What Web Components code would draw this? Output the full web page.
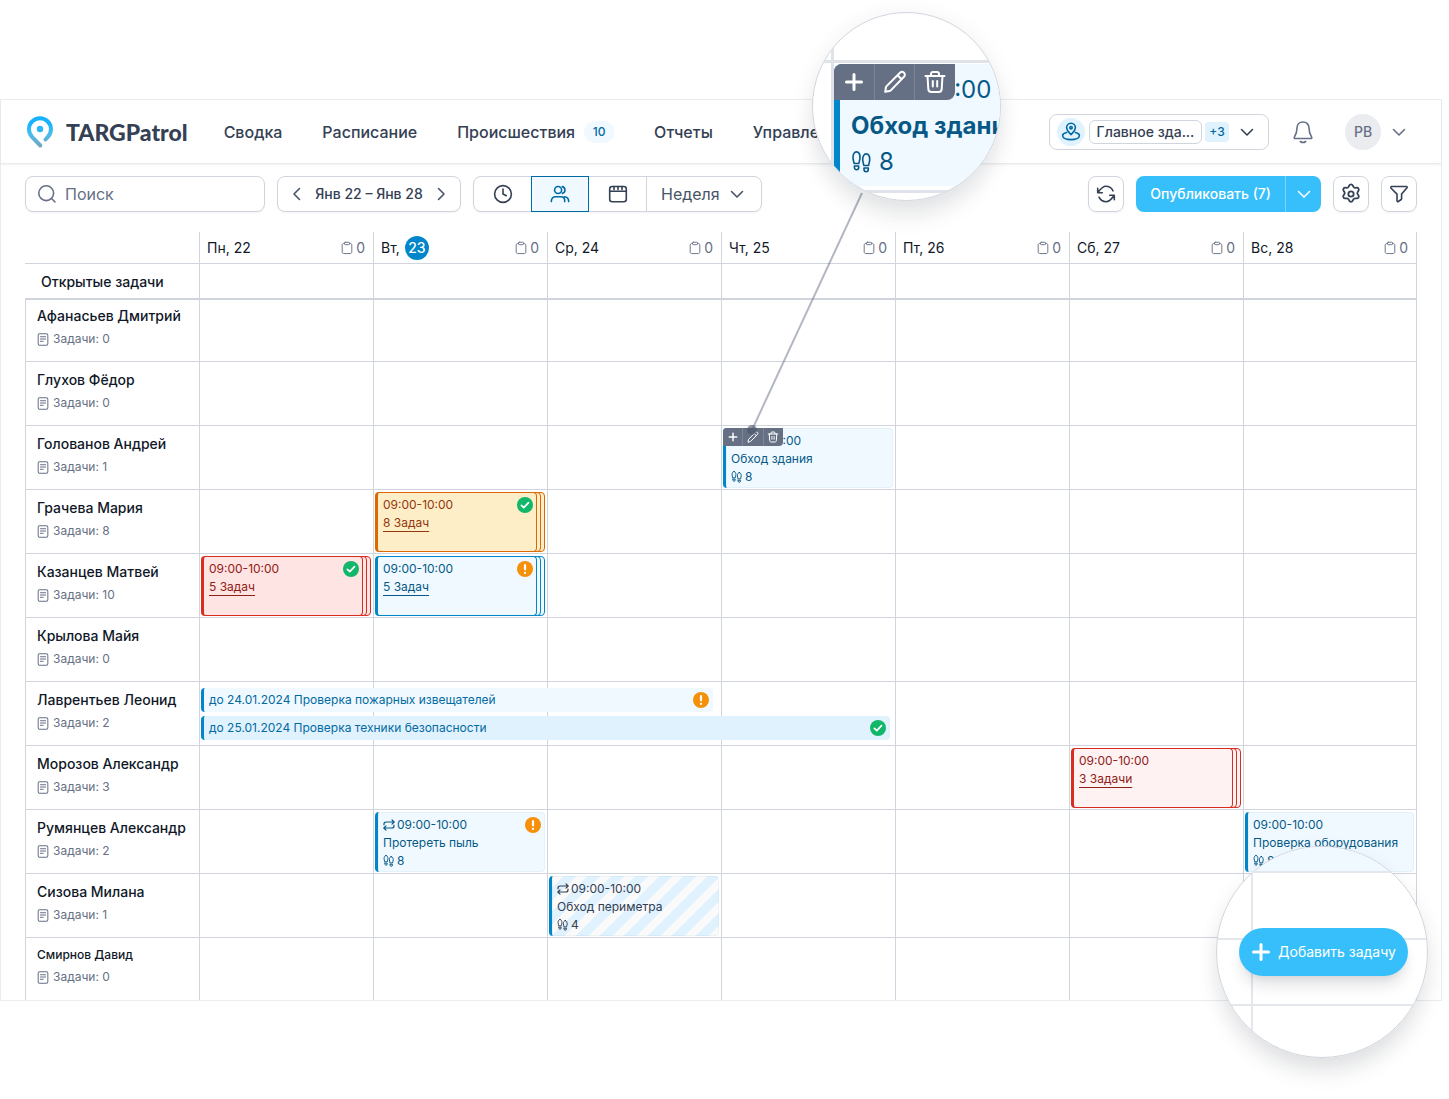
<!DOCTYPE html>
<html lang="ru">
<head>
<meta charset="utf-8">
<meta name="viewport" content="width=device-width, initial-scale=1">
<title>TARGPatrol</title>
<style>
  body {
    margin: 0;
    background: #fff;
    color: #101828;
    font-family: Inter, "Noto Sans", sans-serif;
    font-size: 14px;
    line-height: 20px;
  }
</style>
</head>
<body>
<patrol-app>
  <app-header slot="header"></app-header>
  <schedule-toolbar slot="toolbar"></schedule-toolbar>
  <schedule-grid slot="content"></schedule-grid>
  <card-lens slot="overlay"></card-lens>
  <add-lens slot="overlay"></add-lens>
</patrol-app>

<script>
const define = (name, html, setup) => {
  customElements.define(name, class extends HTMLElement {
    connectedCallback() {
      if (this.shadowRoot) return;
      const root = this.attachShadow({ mode: 'open' });
      const t = document.createElement('template');
      t.innerHTML = '<style>:host,*{box-sizing:border-box}</style>' + (typeof html === 'function' ? html(this) : html);
      root.append(t.content.cloneNode(true));
      if (setup) setup(this, root);
    }
  });
};

/* ---------- icons: [viewBox, markup] ---------- */
const ICONS = {
  search: ['0 0 20 20', '<circle cx="9.2" cy="9.2" r="7.4"/><path d="M14.8 14.8l3.2 3.2"/>'],
  left: ['0 0 20 20', '<path d="M12.5 4.5L7 10l5.5 5.5"/>'],
  right: ['0 0 20 20', '<path d="M7.5 4.5L13 10l-5.5 5.5"/>'],
  down: ['0 0 20 20', '<path d="M4.5 7.5L10 13l5.5-5.5"/>'],
  clock: ['0 0 20 20', '<circle cx="10" cy="10" r="8.4"/><path d="M10 5v5l3.3 1.7"/>'],
  users: ['0 0 20 20', '<circle cx="8.1" cy="6" r="3.5"/><path d="M12.3 2.6a3.5 3.5 0 0 1 0 6.8M1.4 17.6v-.8c0-2.3 1.6-4 4-4h5.3c2.400 0 4 1.700 4 4v.8M14.300 12.700c2.700.2 4.300 1.800 4.300 4.100v.8"/>'],
  calendar: ['0 0 20 20', '<rect x="1.700" y="2.500" width="16.600" height="15.300" rx="2.500"/><path d="M1.700 7.200h16.600M6 2.500v3M10 2.500v3M14 2.500v3"/>'],
  refresh: ['0 0 20 20', '<path d="M1.700 4.200v4.600h4.600M18.300 15.800v-4.600h-4.600M2 8.500C4.200 5.500 6 2.300 10 2.300c3.200 0 5.600 1.700 7 4.500M18 11.500c-2.200 3-4 6.200-8 6.200-3.200 0-5.600-1.700-7-4.500"/>'],
  gear: ['1 1 18 18', '<circle cx="10" cy="10" r="2.400"/><path d="M8.100 2.900l.3-.6a1.800 1.800 0 0 1 3.200 0l.5 1.100a1.800 1.800 0 0 0 1.800 1l1.200-.1a1.800 1.800 0 0 1 1.600 2.800l-.7 1a1.800 1.800 0 0 0 0 2.100l.7 1a1.800 1.800 0 0 1-1.600 2.800l-1.200-.1a1.800 1.800 0 0 0-1.800 1l-.5 1.100a1.800 1.800 0 0 1-3.200 0l-.5-1.100a1.800 1.800 0 0 0-1.800-1l-1.200.1a1.800 1.800 0 0 1-1.600-2.800l.7-1a1.800 1.800 0 0 0 0-2.100l-.7-1a1.800 1.800 0 0 1 1.600-2.800l1.200.1a1.800 1.800 0 0 0 1.800-1z"/>'],
  filter: ['0 0 20 20', '<path d="M1.800 3.300c0-.5.3-.8.8-.8h14.800c.8 0 1 .8.600 1.300l-5.400 6.300v4.600c0 .4-.1.600-.4.800l-2.900 2c-.6.400-1.300 0-1.300-.7v-6.700L2.100 4.200c-.2-.3-.3-.6-.3-.9z"/>'],
  bell: ['0 0 24 24', '<path d="M9.300 21.500c1.600 1.200 3.800 1.200 5.400 0M18 8c0-3.600-2.500-6-6-6S6 4.400 6 8c0 5-1.300 7-2.700 9.300-.3.500 0 1.200.7 1.200h16c.7 0 1-.7.700-1.200C19.300 15 18 13 18 8z"/>'],
  place: ['0 0 20 20', '<path d="M10 12.700c-.8-1.300-4.400-3.500-4.400-7.100a4.400 4.400 0 0 1 8.800 0c0 3.600-3.600 5.800-4.400 7.100z"/><circle cx="10" cy="5.700" r="1.200"/><path d="M5.600 10.500c-2.500.6-4 1.600-4 3C1.600 16 5.400 17.600 10 17.600s8.400-1.600 8.400-4.100c0-1.400-1.500-2.400-4-3"/>'],
  clipboard: ['0 0 14 16', '<path d="M4 2.700H3.300c-1.100 0-1.900.8-1.900 1.900v8c0 1.100.8 1.900 1.900 1.900h7.400c1.100 0 1.900-.8 1.900-1.900v-8c0-1.100-.8-1.900-1.900-1.900H10"/><rect x="4" y="1.300" width="6" height="2.800" rx="1"/>'],
  note: ['0 0 12 14', '<rect x=".8" y=".8" width="10.400" height="12.400" rx="1.500"/><path d="M3.200 4h5.600M3.200 6.500h5.600M3.200 9h3"/>'],
  repeat: ['0 0 12 12', '<path d="M9 .8l2.200 2.200L9 5.200M11 3H3.200C1.900 3 1 3.800 1 5v.8M3 6.800L.8 9 3 11.200M1 9h7.800C10.100 9 11 8.200 11 7v-.8"/>'],
  feet: ['0 0 20 22', '<path d="M4.500.9C2.200.9 1 3.700 1 6.600c0 2.200.8 3.800 1.100 5.900h4.800C7.200 10.400 8 8.800 8 6.600 8 3.700 6.800.9 4.500.9zM2.400 15h4.300v1.200c0 1.600-.7 2.500-2.100 2.500s-2.200-.9-2.200-2.500z"/><path d="M14.200 2.900c2.300 0 3.500 2.800 3.500 5.700 0 2.200-.8 3.800-1.100 5.900h-4.800c-.3-2.100-1.100-3.700-1.100-5.900 0-2.900 1.200-5.700 3.500-5.700zM12 17h4.300v1.200c0 1.600-.7 2.500-2.100 2.500s-2.200-.9-2.200-2.500z"/>'],
  plus: ['0 0 20 20', '<path d="M10 2.500v15M2.500 10h15"/>'],
  pencil: ['0 0 24 24', '<path d="M2.200 21.800l.7-4.300c.1-.6.300-1 .7-1.400L17 2.800c1.200-1.200 2.900-1.100 4 0s1.200 2.800 0 4L7.800 20.400c-.4.4-.8.6-1.400.7zM14.600 5.200l4 4"/>'],
  trash: ['0 0 24 24', '<path d="M2.500 6h19M8 6V4c0-1.300.8-2 2-2h4c1.200 0 2 .7 2 2v2M4.500 6l.8 13c.1 1.900 1.200 3 3 3h7.400c1.800 0 2.900-1.100 3-3l.8-13M9.800 11v5.500M14.200 11v5.500"/>'],
  ok: ['0 0 16 16', '<circle cx="8" cy="8" r="8" fill="#12b76a" stroke="none"/><path stroke="#fff" stroke-width="1.700" d="M4.400 8.300l2.400 2.300 4.700-4.900"/>'],
  warn: ['0 0 16 16', '<circle cx="8" cy="8" r="8" fill="#f79009" stroke="none"/><path stroke="#fff" stroke-width="2.200" d="M8 4v4.300M8 11.800v.1"/>'],
  logo: ['0 0 26 32', '<defs><linearGradient id="g" x1="0" y1="0" x2="0" y2="1"><stop offset=".2" stop-color="#15b2ff"/><stop offset=".55" stop-color="#48bdec"/><stop offset="1" stop-color="#6fa9c4"/></linearGradient></defs><path stroke="url(#g)" stroke-width="4" d="M13.300 29.500L5 20.800A11 11 0 1 1 21.100 20.600L18.500 23.500"/><circle cx="13" cy="13" r="3.200" fill="#2cb5f7" stroke="none"/>']
};

define('ui-icon', el => {
  const [box, body] = ICONS[el.getAttribute('name')];
  const w = el.getAttribute('w') || 20, h = el.getAttribute('h') || w;
  return `<style>:host{display:block;flex:none;width:${w}px;height:${h}px}svg{display:block;overflow:visible}</style>
  <svg width="${w}" height="${h}" viewBox="${box}" fill="none" stroke="currentColor" stroke-width="${el.getAttribute('stroke') || 1.6}" stroke-linecap="round" stroke-linejoin="round" aria-hidden="true">${body}</svg>`;
});

/* ---------- page shell ---------- */
define('patrol-app', `<style>
  :host{display:block;padding:99px 7px 98px 0;overflow:hidden}
  main{position:relative;border:1px solid #eaecf0}
  .body{padding:12px 24px 0}
</style>
<main>
  <slot name="header"></slot>
  <div class="body"><slot name="toolbar"></slot><slot name="content"></slot></div>
  <slot name="overlay"></slot>
</main>`);

define('nav-link', el => `<style>
  :host{display:block}
  a{display:flex;align-items:center;gap:9px;color:#344054;font-size:16px;line-height:24px;font-weight:500;text-decoration:none}
  span{background:#f0f9ff;color:#026aa2;border-radius:11px;font-size:12px;line-height:22px;width:30px;text-align:center}
</style><a href="#"><slot></slot>${el.hasAttribute('count') ? `<span>${el.getAttribute('count')}</span>` : ''}</a>`);

define('app-header', `<style>
  :host{display:flex;align-items:center;height:64px;padding:0 32px 0 26px;border-bottom:1px solid #eaecf0;box-shadow:0 1px 2px rgba(16,24,40,.06)}
  .logo{display:flex;align-items:center;gap:13px;color:#344054;text-decoration:none;font:900 23px/28px Lato,sans-serif}
  nav{display:flex;gap:40px;margin-left:36px}
  .right{display:flex;align-items:center;margin-left:auto}
  button{font:inherit;background:none;border:0;padding:0;color:#667085;display:flex;align-items:center}
  .site{height:36px;width:220px;padding:0 11px 0 7px;border:1px solid #d0d5dd;border-radius:8px;color:#344054}
  .pin{display:grid;place-items:center;width:28px;height:28px;border-radius:50%;background:#e0f2fe;color:#026aa2}
  .chip{margin-left:4px;flex:1;border:1px solid #d0d5dd;border-radius:6px;line-height:22px;font-weight:500;text-align:center;white-space:nowrap}
  .more{margin:0 8px 0 3px;width:24px;border-radius:4px;background:#e0f2fe;color:#026aa2;font-size:12px;font-weight:500;line-height:20px}
  .bell{margin:0 30px 0 22px}
  .user{gap:8px}
  .ava{width:36px;height:36px;border-radius:50%;background:#eaecf0;line-height:36px;font-weight:500}
</style>
<a class="logo" href="#"><ui-icon name="logo" w="26" h="32"></ui-icon>TARGPatrol</a>
<nav>
  <nav-link>Сводка</nav-link><nav-link>Расписание</nav-link><nav-link count="10">Происшествия</nav-link><nav-link>Отчеты</nav-link><nav-link>Управление</nav-link>
</nav>
<div class="right">
  <button class="site"><span class="pin"><ui-icon name="place"></ui-icon></span><span class="chip">Главное зда...</span><span class="more">+3</span><ui-icon name="down"></ui-icon></button>
  <button class="bell" aria-label="Уведомления"><ui-icon name="bell" w="24"></ui-icon></button>
  <button class="user"><span class="ava">РВ</span><ui-icon name="down"></ui-icon></button>
</div>`);

define('schedule-toolbar', `<style>
  :host{display:flex;align-items:center;gap:12px;height:36px;color:#344054}
  button,input,select{font:inherit;color:inherit;margin:0;padding:0;border:0;background:none;outline:0}
  button{display:grid;place-items:center}
  .box{display:flex;align-items:center;height:36px;border:1px solid #d0d5dd;border-radius:8px;box-shadow:0 1px 2px rgba(16,24,40,.05);background:#fff}
  .search{width:240px;padding:0 11px;gap:8px;color:#667085}
  .search input{flex:1;min-width:0;font-size:16px;line-height:24px}
  .search input::placeholder{color:#667085;opacity:1}
  .range{width:184px;padding:0 9px;justify-content:space-between;font-weight:500;white-space:nowrap}
  .range button{color:#475467}
  .seg button{width:57px;height:34px}
  .seg button.on{width:58px;height:36px;border:1px solid #026aa2;background:#f0f9ff;color:#026aa2}
  .pick{display:grid;align-items:center;width:115px;height:34px;border-left:1px solid #d0d5dd}
  .pick>*{grid-area:1/1}
  .pick select{appearance:none;width:100%;height:34px;padding-left:14px;font-size:16px;color:#475467}
  .pick ui-icon{justify-self:end;margin-right:14px;color:#475467;pointer-events:none}
  .sq{width:36px;height:36px;border:1px solid #d0d5dd;border-radius:8px;box-shadow:0 1px 2px rgba(16,24,40,.05)}
  .pub{display:flex;height:36px;border-radius:8px;background:#36bffa;color:#fff;overflow:hidden}
  .pub button{height:36px;padding:0 14px;font-weight:500}
  .pub button+button{width:36px;padding:0;border-left:1px solid #7cd4fd}
  .refresh{margin-left:auto}
</style>
<label class="box search"><ui-icon name="search"></ui-icon><input type="text" placeholder="Поиск" aria-label="Поиск"></label>
<div class="box range"><button aria-label="Назад"><ui-icon name="left"></ui-icon></button><span>Янв 22 – Янв 28</span><button aria-label="Вперёд"><ui-icon name="right"></ui-icon></button></div>
<div class="box seg"><button aria-label="Время"><ui-icon name="clock"></ui-icon></button><button class="on" aria-label="Сотрудники"><ui-icon name="users"></ui-icon></button><button aria-label="Календарь"><ui-icon name="calendar"></ui-icon></button><label class="pick"><select aria-label="Период"><option>Неделя</option></select><ui-icon name="down"></ui-icon></label></div>
<button class="sq refresh" aria-label="Обновить"><ui-icon name="refresh"></ui-icon></button>
<div class="pub"><button>Опубликовать (7)</button><button aria-label="Ещё"><ui-icon name="down"></ui-icon></button></div>
<button class="sq" aria-label="Настройки"><ui-icon name="gear"></ui-icon></button>
<button class="sq" aria-label="Фильтр"><ui-icon name="filter"></ui-icon></button>`);

/* Toolbar with add / edit / delete; the "big" attribute doubles its size. */
define('card-actions', el => {
  const big = el.hasAttribute('big');
  const [p, s] = big ? [20, 24] : [10, 12];
  return `<style>
  :host{display:flex;width:${big ? 121 : 60}px;height:${big ? 36 : 18}px;overflow:hidden;background:#667085;color:#fff;border-radius:${big ? '8px 0' : '4px 0'}}
  button{flex:1;display:grid;place-items:center;padding:0;border:0;background:none;color:inherit}
  button+button{border-left:1px solid #7c8599}
</style>
<button aria-label="Добавить"><ui-icon name="plus" w="${p}" stroke="3"></ui-icon></button>
<button aria-label="Изменить"><ui-icon name="pencil" w="${s}" stroke="2"></ui-icon></button>
<button aria-label="Удалить"><ui-icon name="trash" w="${s}" stroke="2"></ui-icon></button>`;
});

/* ---------- task card ---------- */
define('task-card', el => {
  const a = n => el.getAttribute(n);
  const tone = {
    blue: ['#f0f9ff', '#0086c9', '#065986'],
    orange: ['#feeec7', '#dc6803', '#93370d'],
    red: ['#fee4e2', '#d92d20', '#912018'],
    rose: ['#fef3f2', '#d92d20', '#912018'],
    hatch: ['repeating-linear-gradient(135deg,#fafafa 0 8px,#e0f2fe 8px 17px)', '#0086c9', '#344054']
  }[a('tone')];
  const stack = el.hasAttribute('stack');
  return `<style>
  :host{display:block;position:relative;height:60px;${stack ? 'padding-right:8px' : ''};color:${tone[2]};font-size:12px;line-height:18px;white-space:nowrap}
  article{position:relative;display:flex;justify-content:space-between;height:60px;padding:${stack ? 3 : 4}px ${stack ? 3 : 4}px 0 5px;border-radius:4px;background:${tone[0]};
    border-left:3px solid ${tone[1]};${stack ? `border:1px solid ${tone[1]};border-left-width:3px` : 'box-shadow:inset 0 0 0 1px rgba(2,106,162,.05)'}}
  .sheet{position:absolute;inset:0 0 0 8px;border:1px solid ${tone[1]};border-radius:4px;background:${tone[0]}}
  .sheet+.sheet{right:4px}
  .line{display:flex;align-items:center;gap:2px}
  .status{margin-top:1px}
  a{color:inherit;text-decoration:underline;text-underline-offset:4px;text-decoration-thickness:1px}
  card-actions{position:absolute;left:0;top:0}
</style>
${stack ? '<div class="sheet"></div><div class="sheet"></div>' : ''}
<article><div>
  <div class="line">${el.hasAttribute('repeat') ? '<ui-icon name="repeat" w="12" stroke="1.2"></ui-icon>' : ''}<span>09:00-10:00</span></div>
  <div>${stack ? '<a href="#"><slot></slot></a>' : '<slot></slot>'}</div>
  ${a('rounds') ? `<div class="line"><ui-icon name="feet" w="12" h="12" stroke="1.8"></ui-icon><span>${a('rounds')}</span></div>` : ''}
</div>${a('status') ? `<ui-icon class="status" name="${a('status')}" w="16"></ui-icon>` : ''}</article>
${el.hasAttribute('actions') ? '<card-actions></card-actions>' : ''}`;
});

define('span-bar', el => `<style>
  :host{display:flex;align-items:center;justify-content:space-between;height:24px;padding:0 4px 0 5px;border-left:3px solid #0086c9;border-radius:4px;color:#026aa2;font-size:12px;line-height:18px;white-space:nowrap}
</style><span><slot></slot></span><ui-icon name="${el.getAttribute('status')}" w="16"></ui-icon>`);

/* ---------- week grid ---------- */
const DAYS = [['Пн', 22], ['Вт', 23], ['Ср', 24], ['Чт', 25], ['Пт', 26], ['Сб', 27], ['Вс', 28]];
const TODAY = 23;
const PEOPLE = [
  ['Афанасьев Дмитрий', 0, {}],
  ['Глухов Фёдор', 0, {}],
  ['Голованов Андрей', 1, { 3: '<task-card tone="blue" rounds="8" actions>Обход здания</task-card>' }],
  ['Грачева Мария', 8, { 1: '<task-card tone="orange" stack status="ok">8 Задач</task-card>' }],
  ['Казанцев Матвей', 10, { 0: '<task-card tone="red" stack status="ok">5 Задач</task-card>', 1: '<task-card tone="blue" stack status="warn">5 Задач</task-card>' }],
  ['Крылова Майя', 0, {}],
  ['Лаврентьев Леонид', 2, { 0: '<div class="bars"><span-bar class="three" status="warn">до 24.01.2024 Проверка пожарных извещателей</span-bar><span-bar class="four" status="ok">до 25.01.2024 Проверка техники безопасности</span-bar></div>' }],
  ['Морозов Александр', 3, { 5: '<task-card tone="rose" stack>3 Задачи</task-card>' }],
  ['Румянцев Александр', 2, { 1: '<task-card tone="blue" rounds="8" repeat status="warn">Протереть пыль</task-card>', 6: '<task-card tone="blue" rounds="8">Проверка оборудования</task-card>' }],
  ['Сизова Милана', 1, { 2: '<task-card tone="hatch" rounds="4" repeat>Обход периметра</task-card>' }],
  ['Смирнов Давид', 0, {}]
];

define('schedule-grid', () => `<style>
  :host{display:block;margin-top:20px}
  table{width:100%;table-layout:fixed;border-collapse:separate;border-spacing:0}
  .who{width:174px}
  th,td{padding:0;text-align:left;vertical-align:top;font-weight:400;border-bottom:1px solid #d0d5dd}
  th+th,td{border-left:1px solid #d0d5dd}
  tr>:last-child{border-right:1px solid #d0d5dd}
  thead th{height:32px;vertical-align:middle}
  thead th:first-child{border-left:0}
  .day{display:flex;align-items:center;gap:5px;padding:0 8px 0 7px;color:#101828}
  .today{display:inline-block;width:24px;border-radius:50%;background:#0086c9;color:#fff;font-weight:500;line-height:24px;text-align:center}
  .count{display:flex;align-items:center;gap:3px;margin-left:auto;color:#667085}
  .open>*{height:36px;border-bottom-width:2px}
  .open th{padding:8px 16px 0;font-weight:500}
  .row>*{height:64px}
  .row th{border-left:1px solid #d0d5dd;padding:8px 0 0 11px}
  .row td{position:relative;padding:2px 2px 0 1px}
  .row.first>*,.row.last>*{height:62px}
  .row.first th{padding-top:6px}
  .row.last>*{border-bottom:0}
  .name{font-weight:500;white-space:nowrap}
  .last .name{font-size:12px;line-height:18px}
  .sub{display:flex;align-items:center;gap:4px;margin-top:4px;color:#667085;font-size:12px;line-height:18px}
  .bars{position:absolute;inset:6px 0 auto 1px;display:grid;grid-template-columns:100%;gap:4px;z-index:1}
  .three{width:calc(300% - 4px);background:#f0f9ff}
  .four{width:calc(400% + 1px);background:#e0f2fe}
</style>
<table>
  <colgroup><col class="who"><col span="7"></colgroup>
  <thead><tr><th aria-label="Сотрудник"></th>${DAYS.map(([d, n]) => `<th scope="col"><div class="day"><span>${d}, ${n === TODAY ? '' : n}</span>${n === TODAY ? `<span class="today">${n}</span>` : ''}<span class="count"><ui-icon name="clipboard" w="12" h="14" stroke="1.1"></ui-icon>0</span></div></th>`).join('')}</tr></thead>
  <tbody>
    <tr class="open"><th scope="row">Открытые задачи</th>${'<td></td>'.repeat(7)}</tr>
    ${PEOPLE.map(([name, n, cells], i) => `<tr class="row${i ? '' : ' first'}${i === PEOPLE.length - 1 ? ' last' : ''}"><th scope="row"><div class="name">${name}</div><div class="sub"><ui-icon name="note" w="12" h="13" stroke="1.1"></ui-icon><span>Задачи: ${n}</span></div></th>${DAYS.map((_, d) => `<td>${cells[d] || ''}</td>`).join('')}</tr>`).join('')}
  </tbody>
</table>`);

/* ---------- magnified Thursday card, anchored to its column ---------- */
define('card-lens', `<style>
  :host{position:absolute;top:-88px;left:calc(198px + (100% - 222px) * 3 / 7 + 16px);width:264px;height:430px;pointer-events:none;z-index:2}
  .wire{position:absolute;left:0;top:0}
  .lens{position:absolute;left:75px;top:0;width:189px;height:189px;border-radius:50%;border:1px solid #d0d5dd;background:#fff;overflow:hidden;
    display:flex;flex-direction:column;padding:47px 0 0 18px}
  .shade{position:absolute;left:75px;top:0;width:189px;height:189px;border-radius:50%;box-shadow:0 20px 24px -4px rgba(16,24,40,.08),0 4px 24px rgba(16,24,40,.07)}
  .rule{height:3px;margin-left:-18px;background:#dfe2e8;flex:none}
  .cell{flex:none;border-left:3px solid #dfe2e8;margin-top:-50px;padding:50px 0 0}
  .card{position:relative;height:122px;margin:1px 0 4px;border-left:6px solid #0086c9;border-radius:8px 0 0 8px;background:#f0f9ff;padding:8px 0 0 11px;font-size:24px;line-height:36px;color:#065986;white-space:nowrap}
  .card b{display:block;font-weight:700}
  .line{display:flex;align-items:center;gap:6px}
  card-actions{position:absolute;left:-6px;top:0}
</style>
<svg class="wire" width="264" height="430" fill="none" aria-hidden="true"><path d="M125 181L15 418" stroke="#667085" stroke-opacity=".5" stroke-width="2"/><circle cx="15" cy="418" r="5" fill="#475467" fill-opacity=".6"/></svg>
<div class="shade"></div>
<div class="lens"><div class="rule"></div><div class="cell"><div class="card"><div>09:00-10:00</div><b>Обход здания</b><div class="line"><ui-icon name="feet" w="22" h="22" stroke="1.6"></ui-icon>8</div><card-actions big></card-actions></div></div><div class="rule"></div></div>`);

/* ---------- magnified corner with the add button ---------- */
define('add-lens', `<style>
  :host{position:absolute;right:13px;bottom:-58px;width:212px;height:212px;border-radius:50%;z-index:2;box-shadow:0 16px 24px -4px rgba(16,24,40,.12),0 4px 24px rgba(16,24,40,.04)}
  .lens{display:grid;grid-template:26px 67px 66px 1fr/36px 1fr;width:100%;height:100%;border-radius:50%;border:1px solid #d0d5dd;background:#fff;overflow:hidden}
  .lens i{border-bottom:2px solid #e4e7ec}
  .lens i:nth-child(odd){border-right:2px solid #e4e7ec}
  .lens i:nth-child(-n+2){background:#f0f9ff;border-right:0}
  .lens i:nth-child(n+7){border-bottom:0}
  button{position:absolute;left:23px;right:20px;top:82px;height:48px;display:flex;align-items:center;justify-content:center;gap:7px;padding:0;border:0;border-radius:24px;background:#36bffa;color:#fff;font:400 14px/20px Inter,sans-serif;white-space:nowrap;
    box-shadow:0 12px 16px -4px rgba(16,24,40,.14),0 4px 6px -2px rgba(16,24,40,.05)}
</style>
<div class="lens"><i></i><i></i><i></i><i></i><i></i><i></i><i></i><i></i></div>
<button><ui-icon name="plus" w="20" stroke="3"></ui-icon><span>Добавить задачу</span></button>`);
</script>
</body>
</html>
